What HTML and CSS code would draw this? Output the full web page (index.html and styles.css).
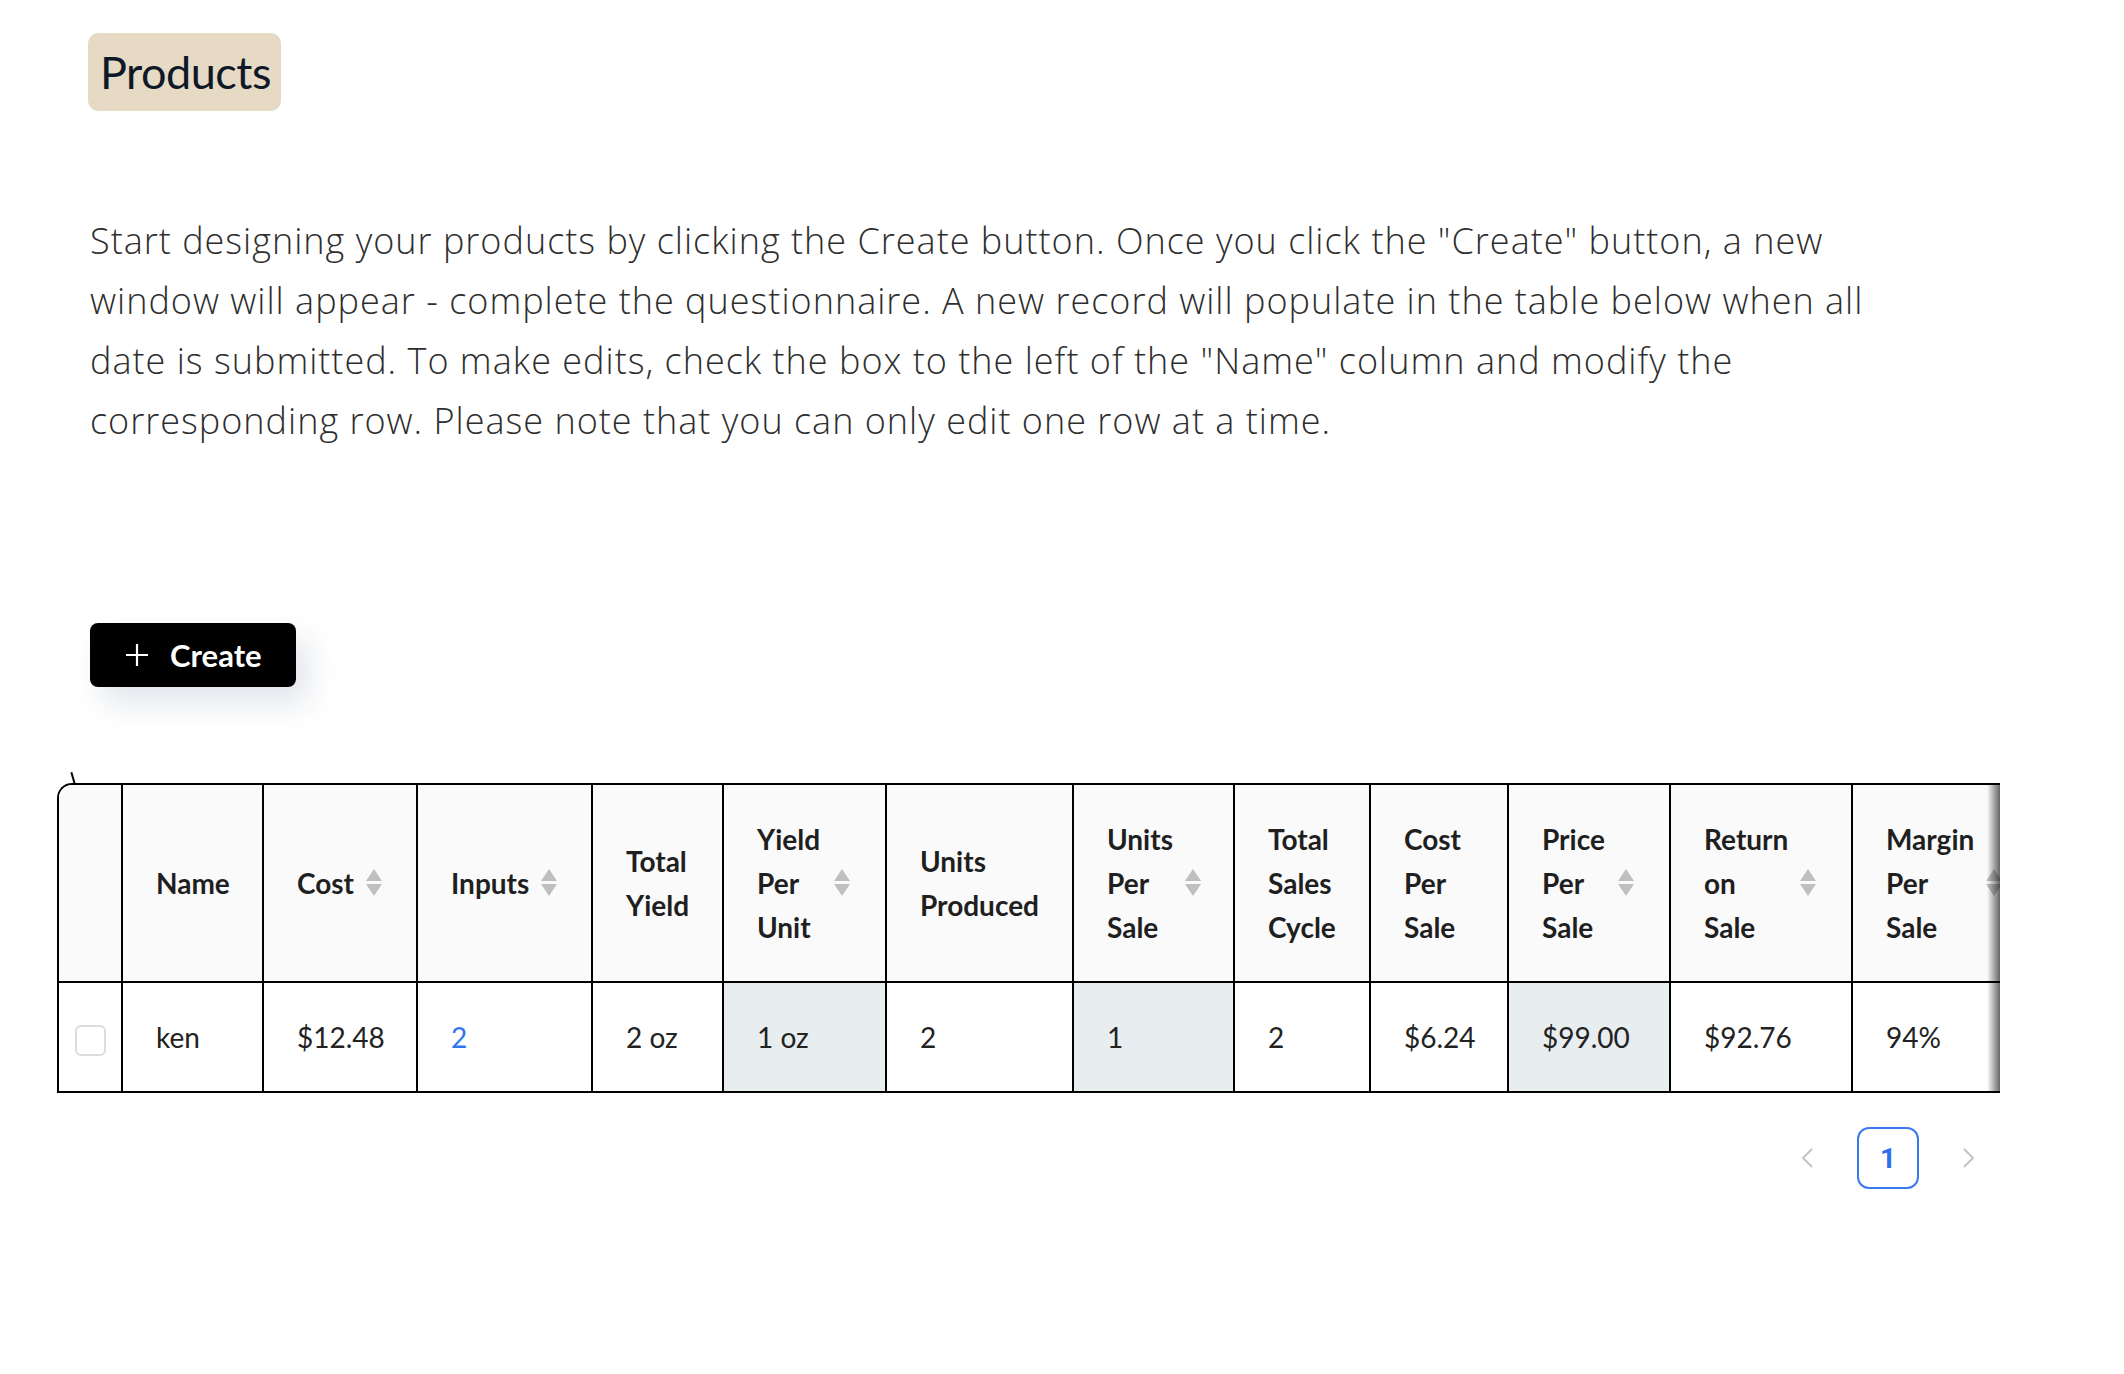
FILE: index.html
```html
<!DOCTYPE html>
<html lang="en">
<head>
<meta charset="utf-8">
<title>Products</title>
<link rel="stylesheet" href="styles.css">
</head>
<body>
<div class="page">
  <section class="intro">
    <h1 class="title-badge">Products</h1>
    <p class="lead">Start designing your products by clicking the Create button. Once you click the "Create" button, a new window will appear - complete the questionnaire. A new record will populate in the table below when all date is submitted. To make edits, check the box to the left of the "Name" column and modify the corresponding row. Please note that you can only edit one row at a time.</p>
    <button class="create-btn" type="button">
      <svg class="plus" width="24" height="24" viewBox="0 0 24 24"><path d="M12 1v22M1 12h22" stroke="#fff" stroke-width="2.2" fill="none"/></svg>
      <span>Create</span>
    </button>
  </section>

  <div class="table-wrap">
    <span class="tick"></span>
    <div class="table-scroll">
      <table class="grid">
        <colgroup>
          <col class="w-check"><col class="w-name"><col class="w-cost"><col class="w-inputs"><col class="w-tyield"><col class="w-ypu"><col class="w-uprod"><col class="w-ups"><col class="w-tsc"><col class="w-cps"><col class="w-pps"><col class="w-ros"><col class="w-mps">
        </colgroup>
        <thead>
          <tr>
            <th class="first"></th>
            <th>Name</th>
            <th><div class="th-sort"><span>Cost</span><svg class="sorter" width="16" height="28" viewBox="0 0 16 28"><path d="M8 0L16 12H0Z M0 15H16L8 27Z" fill="#bfbfbf"/></svg></div></th>
            <th><div class="th-sort"><span>Inputs</span><svg class="sorter" width="16" height="28" viewBox="0 0 16 28"><path d="M8 0L16 12H0Z M0 15H16L8 27Z" fill="#bfbfbf"/></svg></div></th>
            <th>Total<br>Yield</th>
            <th><div class="th-sort"><span>Yield<br>Per<br>Unit</span><svg class="sorter" width="16" height="28" viewBox="0 0 16 28"><path d="M8 0L16 12H0Z M0 15H16L8 27Z" fill="#bfbfbf"/></svg></div></th>
            <th>Units<br>Produced</th>
            <th><div class="th-sort"><span>Units<br>Per<br>Sale</span><svg class="sorter" width="16" height="28" viewBox="0 0 16 28"><path d="M8 0L16 12H0Z M0 15H16L8 27Z" fill="#bfbfbf"/></svg></div></th>
            <th>Total<br>Sales<br>Cycle</th>
            <th>Cost<br>Per<br>Sale</th>
            <th><div class="th-sort"><span>Price<br>Per<br>Sale</span><svg class="sorter" width="16" height="28" viewBox="0 0 16 28"><path d="M8 0L16 12H0Z M0 15H16L8 27Z" fill="#bfbfbf"/></svg></div></th>
            <th><div class="th-sort"><span>Return<br>on<br>Sale</span><svg class="sorter" width="16" height="28" viewBox="0 0 16 28"><path d="M8 0L16 12H0Z M0 15H16L8 27Z" fill="#bfbfbf"/></svg></div></th>
            <th><div class="th-sort"><span>Margin<br>Per<br>Sale</span><svg class="sorter" width="16" height="28" viewBox="0 0 16 28"><path d="M8 0L16 12H0Z M0 15H16L8 27Z" fill="#bfbfbf"/></svg></div></th>
          </tr>
        </thead>
        <tbody>
          <tr>
            <td class="check-cell"><span class="checkbox"></span></td>
            <td>ken</td>
            <td>$12.48</td>
            <td><a class="link" href="#">2</a></td>
            <td>2 oz</td>
            <td class="sorted">1 oz</td>
            <td>2</td>
            <td class="sorted">1</td>
            <td>2</td>
            <td>$6.24</td>
            <td class="sorted">$99.00</td>
            <td>$92.76</td>
            <td>94%</td>
          </tr>
        </tbody>
      </table>
    </div>
    <span class="ping-right"></span>
  </div>

  <nav class="pager">
    <span class="pager-item"><svg width="12" height="20" viewBox="0 0 12 20"><path d="M11 1L2 10L11 19" stroke="#c4c4c4" stroke-width="2" fill="none"/></svg></span>
    <span class="pager-item active">1</span>
    <span class="pager-item"><svg width="12" height="20" viewBox="0 0 12 20"><path d="M1 1L10 10L1 19" stroke="#c4c4c4" stroke-width="2" fill="none"/></svg></span>
  </nav>
</div>
</body>
</html>
```

FILE: styles.css
```css
* { box-sizing: border-box; }

body {
  margin: 0;
  background: #ffffff;
  font-family: "Lato", "Liberation Sans", sans-serif;
  color: #1f1f1f;
}

.page {
  padding: 33px 124px 60px 57px;
}

.intro {
  padding-left: 31px;
}

.title-badge {
  display: inline-block;
  margin: 0;
  height: 78px;
  padding: 0 10px 0 12px;
  line-height: 78px;
  background: #e6dac4;
  border-radius: 10px;
  font-size: 45px;
  font-weight: 400;
  letter-spacing: -0.5px;
  color: #0f1828;
}

.lead {
  margin: 100px 0 0 2px;
  width: 1835px;
  font-family: "Open Sans", "Lato", sans-serif;
  font-weight: 300;
  font-size: 36px;
  letter-spacing: 1px;
  line-height: 60px;
  color: #2e2e2e;
}

.create-btn {
  display: flex;
  align-items: center;
  gap: 21px;
  margin: 172px 0 0 2px;
  height: 64px;
  padding: 0 34px 0 35px;
  border: none;
  border-radius: 8px;
  background: #000000;
  color: #ffffff;
  font-family: "Lato", sans-serif;
  font-size: 31px;
  font-weight: 700;
  box-shadow: 12px 16px 30px rgba(20, 40, 90, 0.12);
}

.create-btn .plus { flex: none; }

.table-wrap {
  position: relative;
  margin-top: 96px;
  width: 1943px;
}

.tick {
  position: absolute;
  left: 15px;
  top: -11px;
  width: 2px;
  height: 12px;
  background: #000;
  transform: rotate(-16deg);
}

.table-scroll {
  overflow: hidden;
  width: 1943px;
}

.grid {
  table-layout: fixed;
  width: 1981px;
  border-collapse: separate;
  border-spacing: 0;
  border-top: 2px solid #000;
  border-left: 2px solid #000;
  border-top-left-radius: 15px;
  font-size: 28px;
  line-height: 44px;
}

.w-check { width: 64px; }
.w-name { width: 141px; }
.w-cost { width: 154px; }
.w-inputs { width: 175px; }
.w-tyield { width: 131px; }
.w-ypu { width: 163px; }
.w-uprod { width: 187px; }
.w-ups { width: 161px; }
.w-tsc { width: 136px; }
.w-cps { width: 138px; }
.w-pps { width: 162px; }
.w-ros { width: 182px; }
.w-mps { width: 185px; }

.grid th,
.grid td {
  border-right: 2px solid #000;
  border-bottom: 2px solid #000;
  padding: 32px 35px 32px 33px;
  text-align: left;
  vertical-align: middle;
  white-space: nowrap;
}

.grid th {
  background: #fafafa;
  font-weight: 700;
  color: #1f1f1f;
}

.grid th.first {
  border-top-left-radius: 13px;
  padding: 0;
}

.th-sort {
  display: flex;
  align-items: center;
  justify-content: space-between;
  gap: 12px;
}

.sorter { flex: none; }

.grid td {
  background: #ffffff;
  font-weight: 400;
  color: #222222;
}

.grid td.sorted {
  background: #e8edf0;
}

.grid td.check-cell {
  padding: 0;
  text-align: center;
}

.checkbox {
  display: inline-block;
  width: 31px;
  height: 31px;
  border: 2px solid #dcdcdc;
  border-radius: 6px;
  background: #fff;
  vertical-align: middle;
}

.link {
  color: #2f74f0;
  text-decoration: none;
}

.ping-right {
  position: absolute;
  right: 0;
  top: 0;
  bottom: 0;
  width: 13px;
  background: linear-gradient(to right, rgba(0, 0, 0, 0), rgba(0, 0, 0, 0.6));
}

.pager {
  display: flex;
  justify-content: flex-end;
  gap: 19px;
  margin-top: 34px;
  width: 1943px;
}

.pager-item {
  display: flex;
  align-items: center;
  justify-content: center;
  width: 62px;
  height: 62px;
  border-radius: 12px;
}

.pager-item.active {
  border: 2px solid #3a78f2;
  color: #2f6fef;
  font-family: "Roboto", "Inter", sans-serif;
  font-weight: 700;
  font-size: 28px;
}
```
